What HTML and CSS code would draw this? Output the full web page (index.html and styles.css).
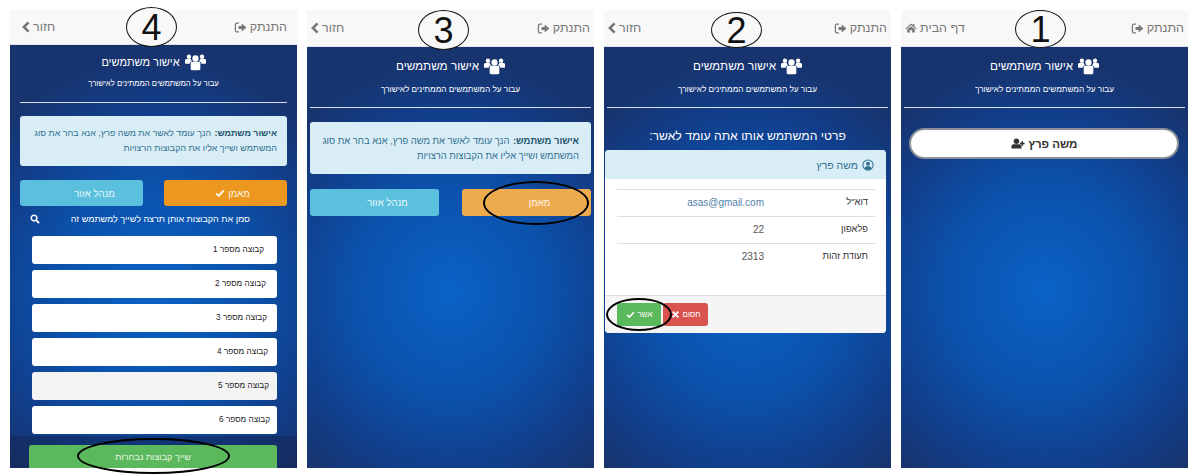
FILE: index.html
```html
<!DOCTYPE html>
<html lang="he">
<head>
<meta charset="utf-8">
<title>אישור משתמשים</title>
<link rel="stylesheet" href="styles.css">
</head>
<body>
<svg class="defs" aria-hidden="true">
  <symbol id="i-out" viewBox="0 0 16 14"><path d="M6 1.500H3.500a2 2 0 0 0-2 2v7a2 2 0 0 0 2 2H6" fill="none" stroke="currentColor" stroke-width="1.600"/><path d="M5.500 5H9.500V1.800L15.500 7l-6 5.200V9H5.500z" fill="currentColor"/></symbol>
  <symbol id="i-back" viewBox="4 1 9 14"><path d="M11.500 2.500 6 8l5.500 5.500" fill="none" stroke="currentColor" stroke-width="3"/></symbol>
  <symbol id="i-users" viewBox="0 0 24 20"><circle cx="12" cy="6" r="3.600" fill="currentColor"/><circle cx="4.500" cy="4" r="2.500" fill="currentColor"/><circle cx="19.500" cy="4" r="2.500" fill="currentColor"/><path d="M6.500 11.500q0-1.700 2-1.700h7q2 0 2 1.700V18q0 1.500-2 1.500h-7q-2 0-2-1.500z" fill="currentColor"/><path d="M0 8q0-1.500 2-1.500h4.500q.5 1.500 1.500 2.500-2.800.5-2.800 3H1q-1 0-1-1zM24 8q0-1.500-2-1.500h-4.500q-.5 1.500-1.500 2.500 2.800.5 2.800 3H23q1 0 1-1z" fill="currentColor"/></symbol>
  <symbol id="i-check" viewBox="0 0 16 16"><path d="M2 8.500 6 12.500 14 4" fill="none" stroke="currentColor" stroke-width="3"/></symbol>
  <symbol id="i-search" viewBox="0 0 16 16"><circle cx="6.500" cy="6.500" r="4.500" fill="none" stroke="currentColor" stroke-width="2.400"/><path d="M10 10l4.500 4.500" stroke="currentColor" stroke-width="3"/></symbol>
  <symbol id="i-home" viewBox="0 0 16 16"><path d="M8 2 .5 8.500l1 1L8 4l6.500 5.500 1-1L12.500 6V2.500h-2v1.800z" fill="currentColor"/><path d="M3 9.800 8 5.500l5 4.300V14H9.500v-3.500h-3V14H3z" fill="currentColor"/></symbol>
  <symbol id="i-add" viewBox="0 0 18 14"><circle cx="7" cy="4" r="3.500" fill="currentColor"/><path d="M.5 13.500V11q0-3 3-3h7q3 0 3 3v2.500z" fill="currentColor"/><path d="M14.500 4v6M11.500 7h6" stroke="currentColor" stroke-width="2"/></symbol>
  <symbol id="i-circle" viewBox="0 0 16 16"><circle cx="8" cy="8" r="6.800" fill="none" stroke="currentColor" stroke-width="1.400"/><circle cx="8" cy="6.300" r="2.700" fill="currentColor"/><path d="M3.500 12.500q.5-2.800 3-2.800h3q2.500 0 3 2.800-2 1.800-4.500 1.800t-4.500-1.800z" fill="currentColor"/></symbol>
  <symbol id="i-x" viewBox="0 0 16 16"><path d="M3 3l10 10M13 3 3 13" stroke="currentColor" stroke-width="3.400"/></symbol>
</svg>

<main class="row">
  <section class="phone phone-tight" dir="rtl">
    <header class="nav nav-short">
      <a class="nav-link"><span>התנתק</span><svg class="ico"><use href="#i-out"/></svg></a>
      <a class="nav-link"><span>חזור</span><svg class="ico-back"><use href="#i-back"/></svg></a>
    </header>
    <span class="badge badge-4" dir="ltr">4</span>
    <div class="screen">
      <h1 class="title"><svg class="ico-users"><use href="#i-users"/></svg>אישור משתמשים</h1>
      <p class="sub">עבור על המשתמשים הממתינים לאישורך</p>
      <hr class="rule">
      <div class="alert"><b>אישור משתמש:</b> הנך עומד לאשר את משה פרץ, אנא בחר את סוג המשתמש ושייך אליו את הקבוצות הרצויות</div>
      <div class="choices">
        <button class="choice trust trust-on">מאמן <svg class="ico-check"><use href="#i-check"/></svg></button>
        <button class="choice manager">מנהל אזור</button>
      </div>
      <div class="search"><span>סמן את הקבוצות אותן תרצה לשייך למשתמש זה</span><svg class="ico-search"><use href="#i-search"/></svg></div>
      <ul class="groups">
        <li class="group">קבוצה מספר 1</li>
        <li class="group">קבוצה מספר 2</li>
        <li class="group">קבוצה מספר 3</li>
        <li class="group">קבוצה מספר 4</li>
        <li class="group group-active">קבוצה מספר 5</li>
        <li class="group">קבוצה מספר 6</li>
      </ul>
      <div class="assign-bar"><button class="assign">שייך קבוצות נבחרות</button></div>
    </div>
    <span class="oval oval-assign"></span>
  </section>

  <section class="phone" dir="rtl">
    <header class="nav">
      <a class="nav-link"><span>התנתק</span><svg class="ico"><use href="#i-out"/></svg></a>
      <a class="nav-link"><span>חזור</span><svg class="ico-back"><use href="#i-back"/></svg></a>
    </header>
    <span class="badge badge-3" dir="ltr">3</span>
    <div class="screen">
      <h1 class="title"><svg class="ico-users"><use href="#i-users"/></svg>אישור משתמשים</h1>
      <p class="sub">עבור על המשתמשים הממתינים לאישורך</p>
      <hr class="rule">
      <div class="alert alert-wide"><b>אישור משתמש:</b> הנך עומד לאשר את משה פרץ, אנא בחר את סוג המשתמש ושייך אליו את הקבוצות הרצויות</div>
      <div class="choices choices-wide">
        <button class="choice trust">מאמן</button>
        <button class="choice manager">מנהל אזור</button>
      </div>
    </div>
    <span class="oval oval-trust"></span>
  </section>

  <section class="phone" dir="rtl">
    <header class="nav">
      <a class="nav-link"><span>התנתק</span><svg class="ico"><use href="#i-out"/></svg></a>
      <a class="nav-link"><span>חזור</span><svg class="ico-back"><use href="#i-back"/></svg></a>
    </header>
    <span class="badge badge-2" dir="ltr">2</span>
    <div class="screen">
      <h1 class="title"><svg class="ico-users"><use href="#i-users"/></svg>אישור משתמשים</h1>
      <p class="sub">עבור על המשתמשים הממתינים לאישורך</p>
      <hr class="rule">
      <h2 class="details-title">פרטי המשתמש אותו אתה עומד לאשר:</h2>
      <article class="card">
        <div class="card-head"><svg class="ico-circle"><use href="#i-circle"/></svg>משה פרץ</div>
        <div class="card-body">
          <div class="info"><span class="info-key">דוא"ל</span><span class="info-val info-mail">asas@gmail.com</span></div>
          <div class="info"><span class="info-key">פלאפון</span><span class="info-val">22</span></div>
          <div class="info info-last"><span class="info-key">תעודת זהות</span><span class="info-val">2313</span></div>
        </div>
        <div class="card-foot">
          <button class="mini mini-red">חסום<svg class="ico-mini"><use href="#i-x"/></svg></button>
          <button class="mini mini-green">אשר<svg class="ico-mini"><use href="#i-check"/></svg></button>
        </div>
      </article>
    </div>
    <span class="oval oval-approve"></span>
  </section>

  <section class="phone" dir="rtl">
    <header class="nav">
      <a class="nav-link"><span>התנתק</span><svg class="ico"><use href="#i-out"/></svg></a>
      <a class="nav-link"><span>דף הבית</span><svg class="ico-home"><use href="#i-home"/></svg></a>
    </header>
    <span class="badge badge-1" dir="ltr">1</span>
    <div class="screen">
      <h1 class="title"><svg class="ico-users"><use href="#i-users"/></svg>אישור משתמשים</h1>
      <p class="sub">עבור על המשתמשים הממתינים לאישורך</p>
      <hr class="rule">
      <button class="pill">משה פרץ <svg class="ico-add"><use href="#i-add"/></svg></button>
    </div>
  </section>
</main>
</body>
</html>
```

FILE: styles.css
```css
* { box-sizing: border-box; }
html, body { margin: 0; height: 476px; overflow: hidden; background: #fff; }
body { font-family: "Liberation Sans", Arial, sans-serif; }
.defs { position: absolute; width: 0; height: 0; }

.row { display: flex; gap: 10px; padding: 10px 12px 8px 10px; height: 476px; }
.phone { position: relative; flex: 1 1 0; min-width: 0; display: flex; flex-direction: column; height: 458px; }

.nav { height: 37px; flex: none; background: #f8f8f8; display: flex; justify-content: space-between; align-items: center; padding: 0 4px 0 4px; color: #777; font-size: 12.500px; border-bottom: 1px solid #dfe6ee; }
.nav-short { height: 35px; padding: 0 10px 0 12px; }
.nav-link { display: flex; align-items: center; gap: 3px; }
.ico { width: 13px; height: 11px; }
.ico-back { width: 8px; height: 12px; }
.ico-home { width: 12px; height: 12px; }

.badge { position: absolute; height: 38px; width: 51px; border: 1px solid #111; border-radius: 50%; background: #f8f8f8; color: #111; font-size: 36px; line-height: 37px; text-align: center; }
.badge-4 { left: 116px; top: -3px; height: 40px; line-height: 39px; }
.badge-3 { left: 111px; top: 0; height: 40px; line-height: 39px; }
.badge-2 { left: 107px; top: 2px; height: 36px; line-height: 35px; }
.badge-1 { left: 114px; top: 0; }

.screen { flex: 1; min-height: 0; display: flex; flex-direction: column; overflow: hidden; padding: 0 3px; background: radial-gradient(ellipse 75% 55% at 50% 58%, #0a62c6 0%, #0b52ac 45%, #113f8c 75%, #17346f 100%); color: #fff; }
.phone-tight .screen { padding: 0; }

.title { margin: 9px 0 0; display: flex; justify-content: center; align-items: center; gap: 5px; font-size: 11.700px; font-weight: 400; line-height: 20px; }
.phone-tight .title { margin-top: 7px; font-size: 11px; }
.ico-users { width: 21px; height: 18px; }
.sub { margin: 8px 0 0; text-align: center; font-size: 8.200px; line-height: 11px; }
.phone-tight .sub { margin-top: 6px; font-size: 7.700px; }
.rule { width: 100%; margin: 12px 0 0; border: 0; border-top: 1px solid #d5dfee; flex: none; }
.phone-tight .rule { width: 267px; margin: 13px auto 0; }

.alert { flex: none; width: 267px; height: 50px; margin: 13px auto 0; padding: 10px 10px 0 8px; background: #d9edf7; border-radius: 3px; color: #31708f; font-size: 8.900px; line-height: 14.500px; }
.alert b { color: #245269; margin-left: 1px; }
.alert-wide { width: 281px; height: 52px; margin-top: 14px; padding: 11px 12px 0 8px; font-size: 9.400px; line-height: 15px; }

.choices { flex: none; display: flex; justify-content: space-between; width: 267px; margin: 14px auto 0; }
.choices-wide { width: 281px; margin-top: 15px; }
.choice { width: 123px; height: 26px; border: 0; border-radius: 3px; color: #fff; padding: 0 0 0 26px; font: 9.500px "Liberation Sans", Arial, sans-serif; display: flex; justify-content: center; align-items: center; gap: 3px; }
.choices-wide .choice { width: 129px; height: 27px; }
.trust { background: #eeab4e; color: #fff6e6; }
.trust-on { background: #ec971f; padding-left: 14px; }
.manager { background: #5bc0de; color: #e8f7fb; }
.ico-check { width: 10px; height: 10px; }

.search { flex: none; display: flex; justify-content: space-between; align-items: center; height: 14px; margin: 6px 0 0; padding: 0 47px 0 20px; font-size: 9px; white-space: nowrap; }
.ico-search { width: 10px; height: 10px; }

.groups { list-style: none; margin: 10px 0 0; padding: 0 20px 0 22px; display: flex; flex-direction: column; gap: 6px; flex: none; }
.group { height: 28px; padding: 0 13px 0 0; background: #fff; border-radius: 3px; color: #222; font-size: 8.200px; line-height: 28px; }
.group:nth-child(2) { padding-right: 11px; }
.group:nth-child(3) { padding-right: 10px; }
.group:nth-child(4) { padding-right: 9px; }
.group:nth-child(5) { padding-right: 8px; }
.group:nth-child(6) { padding-right: 7px; }
.group-active { background: #f3f3f4; }

.assign-bar { margin-top: 2px; flex: 1; padding: 9px 20px 0 19px; background: rgba(20, 35, 80, .45); }
.assign { display: block; width: 100%; height: 24px; border: 0; border-radius: 3px 3px 0 0; background: #5cb85c; color: #e6f5e6; font: 9px "Liberation Sans", Arial, sans-serif; }

.details-title { margin: 20px 0 0; text-align: center; font-size: 12.200px; font-weight: 400; line-height: 17px; }
.card { flex: none; margin: 5px 2px 0 0; width: 281px; background: #fff; border-radius: 4px; overflow: hidden; color: #333; }
.card-head { height: 29px; display: flex; align-items: center; gap: 4px; padding: 0 12px; background: #d9edf7; color: #31708f; font-size: 10.500px; }
.ico-circle { width: 12px; height: 12px; }
.card-body { height: 116px; padding: 10px 11px 0 12px; }
.info { display: flex; height: 27px; align-items: center; border-top: 1px solid #ddd; padding-bottom: 2px; }
.info-key { width: 111px; padding-right: 7px; color: #333; font-size: 9.300px; }
.info-val { color: #555; font-size: 10px; }
.info-mail { color: #4f81a8; }
.card-foot { height: 38px; display: flex; justify-content: flex-end; align-items: center; gap: 2px; padding: 0 0 0 12px; background: #f5f5f5; border-top: 1px solid #ddd; }
.mini { width: 45px; height: 23px; border: 0; border-radius: 3px; color: #fff; font: 8px "Liberation Sans", Arial, sans-serif; display: flex; justify-content: center; align-items: center; gap: 3px; padding: 0; }
.mini-red { background: #d9534f; }
.mini-green { background: #5cb85c; width: 44px; }
.ico-mini { width: 9px; height: 9px; }

.pill { flex: none; margin: 20px 6px 0 auto; width: 270px; height: 31px; border: 2.500px solid #8a8f98; border-radius: 16px; background: #fff; color: #333; font: 700 11.500px "Liberation Sans", Arial, sans-serif; display: flex; justify-content: center; align-items: center; gap: 4px; }
.ico-add { width: 14px; height: 11px; }

.oval { position: absolute; border: 2.500px solid #000; border-radius: 50%; }
.oval-assign { left: 67px; top: 428px; width: 153px; height: 36px; }
.oval-trust { left: 176px; top: 171px; width: 106px; height: 44px; }
.oval-approve { left: 2px; top: 288px; width: 66px; height: 33px; }
```
